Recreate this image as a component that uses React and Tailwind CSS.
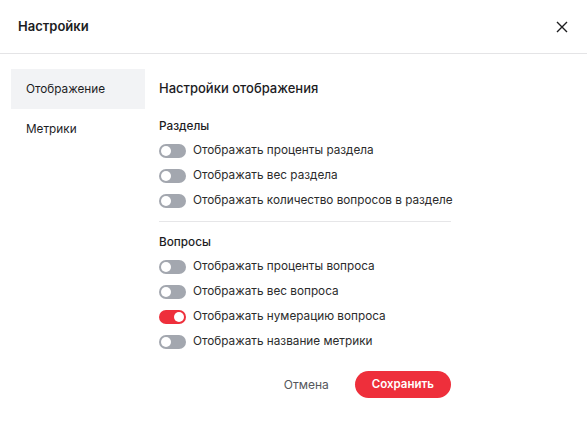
import React from "react";

function Toggle({ on }) {
  return (
    <span
      className={
        "flex h-[14px] w-[27px] shrink-0 items-center rounded-full px-[2px] " +
        (on ? "justify-end bg-[#ee2f3b]" : "justify-start bg-[#a3a7af]")
      }
    >
      <span className="h-[10px] w-[10px] rounded-full bg-white" />
    </span>
  );
}

function Row({ label, on }) {
  return (
    <div className="flex h-[25px] items-center gap-[7px]">
      <Toggle on={on} />
      <span className="whitespace-nowrap text-[11.75px] text-[#2b2b2b]">{label}</span>
    </div>
  );
}

export default function App() {
  return (
    <div
      className="h-[421px] w-[587px] bg-white text-[#1d1d1f]"
      style={{ fontFamily: "Inter, 'Noto Sans', sans-serif" }}
    >
      <div className="flex h-[54px] items-center justify-between border-b border-[#e4e4e6] pl-[18px] pr-[18px]">
        <span className="text-[13px] font-semibold">Настройки</span>
        <svg width="12" height="12" viewBox="0 0 12 12" className="mr-[1px]">
          <path d="M1 1L11 11M11 1L1 11" stroke="#1d1d1f" strokeWidth="1.4" />
        </svg>
      </div>
      <div className="flex pt-[15px]">
        <div className="ml-[11px] flex w-[134px] flex-col">
          <div className="flex h-[40px] items-center bg-[#f2f3f5] pl-[15px] pt-[1px] text-[11.75px]">
            Отображение
          </div>
          <div className="flex h-[42px] items-center pl-[15px] text-[11.75px]">
            Метрики
          </div>
        </div>
        <div className="ml-[14px] flex w-[292px] flex-col">
          <div className="flex h-[40px] items-center text-[13px] font-medium">
            Настройки отображения
          </div>
          <div className="mt-[9px] text-[11.75px] font-medium">Разделы</div>
          <div className="mt-[3px] flex flex-col">
            <Row label="Отображать проценты раздела" />
            <Row label="Отображать вес раздела" />
            <Row label="Отображать количество вопросов в разделе" />
          </div>
          <div className="mt-[7px] h-px bg-[#e6e6e8]" />
          <div className="mt-[12px] text-[11.75px] font-medium">Вопросы</div>
          <div className="mt-[3px] flex flex-col">
            <Row label="Отображать проценты вопроса" />
            <Row label="Отображать вес вопроса" />
            <Row label="Отображать нумерацию вопроса" on />
            <Row label="Отображать название метрики" />
          </div>
          <div className="mt-[17px] flex items-center justify-end gap-[26px]">
            <span className="text-[12px] text-[#55575c]">Отмена</span>
            <span className="flex h-[27px] items-center rounded-full bg-[#ee2f3b] px-[17px] text-[11.5px] font-semibold text-white">
              Сохранить
            </span>
          </div>
        </div>
      </div>
    </div>
  );
}
